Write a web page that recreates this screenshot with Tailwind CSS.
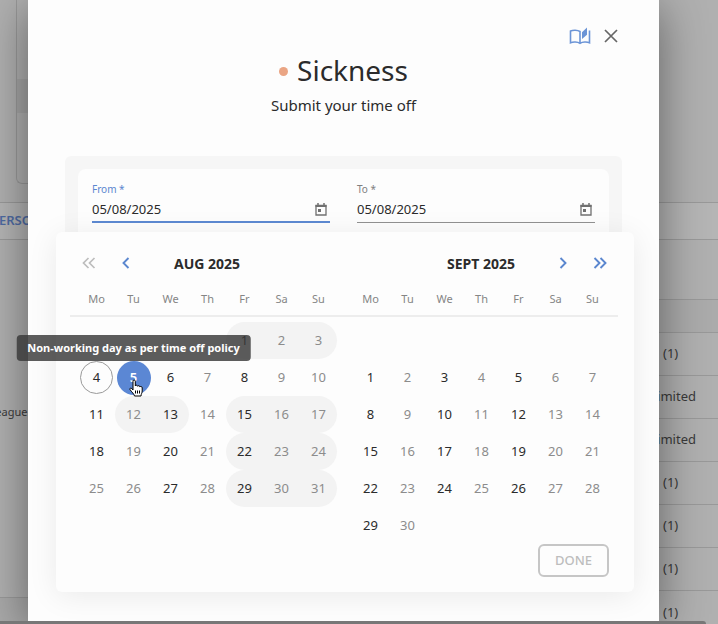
<!DOCTYPE html>
<html lang="en">
<head>
    <meta charset="UTF-8">
    <meta name="viewport" content="width=device-width, initial-scale=1.0">
    <title>Time off</title>
    <script src="https://cdn.jsdelivr.net/npm/@tailwindcss/browser@4"></script>
</head>
<body class="bg-[#b0b0b0] font-['Noto_Sans','Open_Sans',sans-serif] text-[#2b2b2b]">
<div class="relative min-h-screen overflow-hidden flex flex-col">

    <!-- page behind the dialog -->
    <div class="absolute inset-0 flex justify-between text-[13px] text-[#3a3a3a]">
        <div class="w-10 overflow-hidden">
            <div class="h-[202px]">
                <div class="ml-4 h-[184px] border-l border-b border-[#999] rounded-bl-md pt-[79px]">
                    <div class="h-[34px] bg-[#a6a6a6]"></div>
                </div>
            </div>
            <div class="h-[38px] bg-[#b5b5b5] border-y border-[#999] flex items-center">
                <span class="-ml-[9px] font-semibold text-[#4f6ba3]">PERSO</span>
            </div>
            <div class="h-[358px] border-b border-[#999] flex items-center">
                <span class="-ml-6 mb-[14px] text-[11px] leading-4">Colleague</span>
            </div>
            <div class="h-10 bg-[#a9a9a9]"></div>
        </div>
        <div class="w-[59px]">
            <div class="h-[202px]"></div>
            <div class="h-[38px] bg-[#b5b5b5] border-y border-[#999]"></div>
            <div class="h-[60px] border-b border-[#999]"></div>
            <div class="h-[33px] bg-[#ababab] border-b border-[#999]"></div>
            <div class="h-[43px] border-b border-[#999] flex items-center pl-1">(1)</div>
            <div class="h-[43px] border-b border-[#999] flex items-center justify-end pr-[22px]">Unlimited</div>
            <div class="h-[43px] border-b border-[#999] flex items-center justify-end pr-[22px]">Unlimited</div>
            <div class="h-[43px] border-b border-[#999] flex items-center pl-1">(1)</div>
            <div class="h-[43px] border-b border-[#999] flex items-center pl-1">(1)</div>
            <div class="h-[43px] border-b border-[#999] flex items-center pl-1">(1)</div>
            <div class="h-[43px] flex items-center pl-1">(1)</div>
        </div>
    </div>

    <main class="relative grow ml-7 mr-[59px] bg-[#fdfdfd] shadow-[0_8px_44px_rgba(0,0,0,0.45)] pb-7">
        <div class="flex justify-end gap-[7px] pt-6 pr-9">
            <button class="w-6 h-6 flex items-center justify-center text-[#6b94d6]" aria-label="Guide">
                <svg width="22" height="18" viewBox="0 0 22 18" fill="none" stroke="currentColor" stroke-width="1.600">
                    <path d="M11 16.500V4.500C8.500 2.900 4 2.900 1.500 4V15.700C4 14.600 8.500 14.600 11 16.300C13.500 14.600 18 14.600 20.500 15.700V3.500"/>
                    <path d="M13 12V5.200L18 0.500V7.800Z" fill="currentColor" stroke="none"/>
                </svg>
            </button>
            <button class="w-6 h-6 flex items-center justify-center text-[#666]" aria-label="Close">
                <svg width="14" height="14" viewBox="0 0 14 14" stroke="currentColor" stroke-width="1.700">
                    <path d="M1 1L13 13M13 1L1 13"/>
                </svg>
            </button>
        </div>

        <h1 class="mt-1 flex items-center justify-center gap-[9px] text-[28px] leading-9">
            <span class="w-[9px] h-[9px] mt-[2px] rounded-full bg-[#eaa584]"></span>Sickness
        </h1>
        <p class="mt-[7px] text-center text-[15px] leading-5">Submit your time off</p>

        <form class="mt-[41px] mx-[37px] bg-[#f6f6f6] rounded-t-md px-[13px] pt-[13px]">
            <div class="bg-[#fdfdfd] rounded-t-lg px-[14px] pt-3 pb-[9px] grid grid-cols-2 gap-[27px]">
                <div class="border-b-2 border-[#5b87cf]">
                    <label for="from" class="block text-[10px] leading-4 text-[#5b87cf]">From *</label>
                    <div class="flex items-center">
                        <input id="from" type="text" value="05/08/2025" class="grow min-w-0 h-6 text-[13px] outline-none">
                        <svg class="mr-[3px] text-[#707070]" width="12" height="13" viewBox="0 0 12 13" fill="none" stroke="currentColor">
                            <path d="M1 2.500H11V12H1Z" stroke-width="1.300"/><path d="M0.500 3H11.500" stroke-width="2"/>
                            <path d="M3 0V2M9 0V2" stroke-width="1.500"/><path d="M3 6H6V9H3Z" fill="currentColor" stroke="none"/>
                        </svg>
                    </div>
                </div>
                <div class="border-b border-[#8f8f8f]">
                    <label for="to" class="block text-[10px] leading-4 text-[#808080]">To *</label>
                    <div class="flex items-center">
                        <input id="to" type="text" value="05/08/2025" class="grow min-w-0 h-6 text-[13px] outline-none">
                        <svg class="mr-[3px] text-[#707070]" width="12" height="13" viewBox="0 0 12 13" fill="none" stroke="currentColor">
                            <path d="M1 2.500H11V12H1Z" stroke-width="1.300"/><path d="M0.500 3H11.500" stroke-width="2"/>
                            <path d="M3 0V2M9 0V2" stroke-width="1.500"/><path d="M3 6H6V9H3Z" fill="currentColor" stroke="none"/>
                        </svg>
                    </div>
                </div>
            </div>
        </form>

        <section class="ml-7 mr-[25px] bg-[#fdfdfd] rounded-md shadow-[0_4px_30px_rgba(0,0,0,0.08)] pl-[14px] pr-4 pt-[19px] pb-[15px]">
            <div class="grid grid-cols-2 text-[#5b87cf]">
                <div class="grid grid-cols-[37px_37px_1fr_37px_37px] h-6 items-center">
                    <button class="h-6 flex items-center justify-center text-[#bdbdbd]" aria-label="Previous year" disabled>
                        <svg width="14" height="12" viewBox="0 0 14 12" fill="none" stroke="currentColor" stroke-width="1.700"><path d="M6.500 1L1.500 6L6.500 11M12.500 1L7.500 6L12.500 11"/></svg>
                    </button>
                    <button class="h-6 flex items-center justify-center" aria-label="Previous month">
                        <svg width="8" height="12" viewBox="0 0 8 12" fill="none" stroke="currentColor" stroke-width="1.900"><path d="M6.500 1L1.500 6L6.500 11"/></svg>
                    </button>
                    <h2 class="text-center text-[14px] font-bold text-[#2b2b2b]">AUG 2025</h2>
                </div>
                <div class="grid grid-cols-[37px_37px_1fr_37px_37px] h-6 items-center">
                    <h2 class="col-start-3 text-center text-[14px] font-bold text-[#2b2b2b]">SEPT 2025</h2>
                    <button class="h-6 flex items-center justify-center" aria-label="Next month">
                        <svg width="8" height="12" viewBox="0 0 8 12" fill="none" stroke="currentColor" stroke-width="1.900"><path d="M1.500 1L6.500 6L1.500 11"/></svg>
                    </button>
                    <button class="h-6 flex items-center justify-center" aria-label="Next year">
                        <svg width="14" height="12" viewBox="0 0 14 12" fill="none" stroke="currentColor" stroke-width="1.900"><path d="M1.500 1L6.500 6L1.500 11M7.500 1L12.500 6L7.500 11"/></svg>
                    </button>
                </div>
            </div>

            <table class="mt-[9px] w-full table-fixed border-collapse text-center text-[13px]">
                <thead class="text-[11px] text-[#858585]">
                    <tr class="h-8 border-b-2 border-[#ededed]">
                        <td class="w-2"></td>
                        <th class="font-normal">Mo</th><th class="font-normal">Tu</th><th class="font-normal">We</th><th class="font-normal">Th</th><th class="font-normal">Fr</th><th class="font-normal">Sa</th><th class="font-normal">Su</th>
                        <td class="w-[15px]"></td>
                        <th class="font-normal">Mo</th><th class="font-normal">Tu</th><th class="font-normal">We</th><th class="font-normal">Th</th><th class="font-normal">Fr</th><th class="font-normal">Sa</th><th class="font-normal">Su</th>
                        <td class="w-[7px]"></td>
                    </tr>
                    <tr class="h-[6px]"></tr>
                </thead>
                <tbody class="days"></tbody>
            </table>

            <div class="flex justify-end pr-[9px]">
                <button class="h-[33px] w-[71px] border-2 border-[#c6c6c6] rounded-md text-[13px] font-medium text-[#bdbdbd]" disabled>DONE</button>
            </div>
        </section>
    </main>

    <div class="relative h-[3px] mr-3 bg-[#777] rounded-tr-full"></div>
</div>

<script>
    const WEEKS = 6;
    const aug = {
        offset: 4,
        length: 31,
        active: [1, 4, 6, 8, 11, 13, 15, 18, 20, 22, 27, 29],
        ranges: [[1, 3], [12, 13], [15, 17], [22, 24], [29, 31]]
    };
    // September starts on the second line of the grid
    const sept = {
        offset: 7,
        length: 30,
        active: [1, 3, 5, 8, 10, 12, 15, 17, 19, 22, 24, 26, 29],
        ranges: []
    };

    const selectedDay = `
        <button class="w-[34px] h-[34px] rounded-full bg-[#5b87d4] text-white font-semibold">5</button>
        <span role="tooltip" class="absolute z-10 left-1/2 -translate-x-1/2 bottom-[35px] h-[26px] px-[11px] flex items-center rounded-sm bg-[#383838]/82 text-white text-[11px] font-bold whitespace-nowrap">Non-working day as per time off policy</span>
        <svg class="absolute z-10 left-[14px] top-5" width="15" height="18" viewBox="0 0 15 18" fill="white" stroke="black" stroke-linejoin="round">
            <path d="M4 11V2.200C4 0.600 6.300 0.600 6.300 2.200V7C6.600 5.800 8.500 6 8.600 7.300C9 6.300 10.800 6.500 10.900 7.900C11.500 7.100 13.200 7.400 13.200 8.900V12C13.200 14 12.200 14.500 12 17H5.500C5.200 15 2.500 12.800 1 10.600C0.400 9.400 1.800 8.500 2.800 9.600Z"/>
            <path d="M6.500 11.500V14.500M8.500 11.500V14.500M10.500 11.500V14.500"/>
        </svg>`;

    function dayCell(month, week, weekday) {
        const day = week * 7 + weekday - month.offset + 1;
        if (day < 1 || day > month.length) {
            return "<td></td>";
        }
        if (month === aug && day === 5) {
            return `<td class="relative"><div class="flex justify-center">${selectedDay}</div></td>`;
        }
        let button = month.active.includes(day) ? "w-full h-[34px] text-[#2b2b2b]" : "w-full h-[34px] text-[#8c8c8c]";
        if (month === aug && day === 4) {
            button = "w-[33px] h-[33px] rounded-full border border-[#9a9a9a] text-[#2b2b2b]";
        }
        let cell = "";
        const range = month.ranges.find(([first, last]) => day >= first && day <= last);
        if (range) {
            cell = "bg-[#f3f3f3]";
            if (day === range[0]) cell += " rounded-l-full";
            if (day === range[1]) cell += " rounded-r-full";
        }
        return `<td class="${cell}"><div class="flex justify-center"><button class="${button}">${day}</button></div></td>`;
    }

    let rows = "";
    for (let week = 0; week < WEEKS; week++) {
        rows += `<tr class="h-[37px]"><td></td>`;
        for (let i = 0; i < 7; i++) rows += dayCell(aug, week, i);
        rows += "<td></td>";
        for (let i = 0; i < 7; i++) rows += dayCell(sept, week, i);
        rows += "<td></td></tr>";
    }
    document.querySelector(".days").innerHTML = rows;
</script>
</body>
</html>
